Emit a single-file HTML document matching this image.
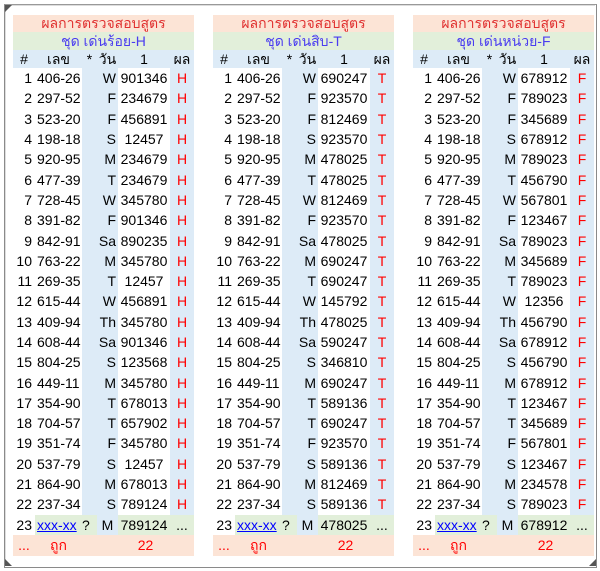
<!DOCTYPE html><html><head><meta charset="utf-8"><style>
body{margin:0;width:600px;height:571px;background:#fff;position:relative;overflow:hidden;font-family:"Liberation Sans","Noto Sans CJK SC",sans-serif;font-size:14px;color:#000}
.fr{position:absolute;left:4px;top:4px;width:591px;height:562px;border:1px solid #8a8a8a;border-top-color:#999}
.fr2{position:absolute;left:5px;top:5px;width:589px;height:560px;border:1px solid #ddd;border-right:none;border-bottom:none}
.tri{position:absolute;width:0;height:0}
table{position:absolute;top:15px;width:181px;border-collapse:collapse;table-layout:fixed}
td{padding:0;height:20.3px;line-height:20px;white-space:nowrap;overflow:hidden}
.h1 td{background:#fce4d6;color:#e03030;text-align:center;height:17px;line-height:17px}
.h2 td{background:#e2efda;color:#4a3cf0;text-align:center;height:18px;line-height:18px}
.h3 td{background:#ddebf7;height:18px;line-height:18px;text-align:center}
.n{text-align:right;padding-right:3px}
.l{padding-left:2px}
.b{background:#ddebf7}
.d{text-align:right;padding-right:2px}
.v{text-align:center}
.r{color:#f00;text-align:center}
.g{background:#e2efda}
.ft td{background:#fce4d6;color:#f00;height:21px}
a{color:#00f}
</style></head><body>
<div class="fr"></div><div class="fr2"></div>
<div class="tri" style="left:5px;top:5px;border-top:7px solid #555;border-right:7px solid transparent"></div>
<div class="tri" style="left:5px;top:559px;border-bottom:7px solid #555;border-right:7px solid transparent"></div>
<div class="tri" style="left:589px;top:559px;border-bottom:7px solid #555;border-left:7px solid transparent"></div>

<table style="left:13px">
<colgroup><col style="width:22px"><col style="width:47px"><col style="width:15px"><col style="width:21px"><col style="width:52px"><col style="width:24px"></colgroup>
<tr class="h1"><td colspan="6">ผลการตรวจสอบสูตร</td></tr>
<tr class="h2"><td colspan="6">ชุด เด่นร้อย-H</td></tr>
<tr class="h3"><td>#</td><td>เลข</td><td>*</td><td>วัน</td><td>1</td><td>ผล</td></tr>
<tr><td class="n">1</td><td class="l">406-26</td><td class="b"></td><td class="b d">W</td><td class="v">901346</td><td class="b r">H</td></tr>
<tr><td class="n">2</td><td class="l">297-52</td><td class="b"></td><td class="b d">F</td><td class="v">234679</td><td class="b r">H</td></tr>
<tr><td class="n">3</td><td class="l">523-20</td><td class="b"></td><td class="b d">F</td><td class="v">456891</td><td class="b r">H</td></tr>
<tr><td class="n">4</td><td class="l">198-18</td><td class="b"></td><td class="b d">S</td><td class="v">12457</td><td class="b r">H</td></tr>
<tr><td class="n">5</td><td class="l">920-95</td><td class="b"></td><td class="b d">M</td><td class="v">234679</td><td class="b r">H</td></tr>
<tr><td class="n">6</td><td class="l">477-39</td><td class="b"></td><td class="b d">T</td><td class="v">234679</td><td class="b r">H</td></tr>
<tr><td class="n">7</td><td class="l">728-45</td><td class="b"></td><td class="b d">W</td><td class="v">345780</td><td class="b r">H</td></tr>
<tr><td class="n">8</td><td class="l">391-82</td><td class="b"></td><td class="b d">F</td><td class="v">901346</td><td class="b r">H</td></tr>
<tr><td class="n">9</td><td class="l">842-91</td><td class="b"></td><td class="b d">Sa</td><td class="v">890235</td><td class="b r">H</td></tr>
<tr><td class="n">10</td><td class="l">763-22</td><td class="b"></td><td class="b d">M</td><td class="v">345780</td><td class="b r">H</td></tr>
<tr><td class="n">11</td><td class="l">269-35</td><td class="b"></td><td class="b d">T</td><td class="v">12457</td><td class="b r">H</td></tr>
<tr><td class="n">12</td><td class="l">615-44</td><td class="b"></td><td class="b d">W</td><td class="v">456891</td><td class="b r">H</td></tr>
<tr><td class="n">13</td><td class="l">409-94</td><td class="b"></td><td class="b d">Th</td><td class="v">345780</td><td class="b r">H</td></tr>
<tr><td class="n">14</td><td class="l">608-44</td><td class="b"></td><td class="b d">Sa</td><td class="v">901346</td><td class="b r">H</td></tr>
<tr><td class="n">15</td><td class="l">804-25</td><td class="b"></td><td class="b d">S</td><td class="v">123568</td><td class="b r">H</td></tr>
<tr><td class="n">16</td><td class="l">449-11</td><td class="b"></td><td class="b d">M</td><td class="v">345780</td><td class="b r">H</td></tr>
<tr><td class="n">17</td><td class="l">354-90</td><td class="b"></td><td class="b d">T</td><td class="v">678013</td><td class="b r">H</td></tr>
<tr><td class="n">18</td><td class="l">704-57</td><td class="b"></td><td class="b d">T</td><td class="v">657902</td><td class="b r">H</td></tr>
<tr><td class="n">19</td><td class="l">351-74</td><td class="b"></td><td class="b d">F</td><td class="v">345780</td><td class="b r">H</td></tr>
<tr><td class="n">20</td><td class="l">537-79</td><td class="b"></td><td class="b d">S</td><td class="v">12457</td><td class="b r">H</td></tr>
<tr><td class="n">21</td><td class="l">864-90</td><td class="b"></td><td class="b d">M</td><td class="v">678013</td><td class="b r">H</td></tr>
<tr><td class="n">22</td><td class="l">237-34</td><td class="b"></td><td class="b d">S</td><td class="v">789124</td><td class="b r">H</td></tr>
<tr><td class="n">23</td><td class="l g"><a href="#">xxx-xx</a></td><td class="g">?</td><td class="b v">M</td><td class="v g">789124</td><td class="g v">...</td></tr>
<tr class="ft"><td class="v">...</td><td class="v">ถูก</td><td></td><td colspan="3" class="v">22</td></tr>
</table>

<table style="left:213px">
<colgroup><col style="width:22px"><col style="width:47px"><col style="width:15px"><col style="width:21px"><col style="width:52px"><col style="width:24px"></colgroup>
<tr class="h1"><td colspan="6">ผลการตรวจสอบสูตร</td></tr>
<tr class="h2"><td colspan="6">ชุด เด่นสิบ-T</td></tr>
<tr class="h3"><td>#</td><td>เลข</td><td>*</td><td>วัน</td><td>1</td><td>ผล</td></tr>
<tr><td class="n">1</td><td class="l">406-26</td><td class="b"></td><td class="b d">W</td><td class="v">690247</td><td class="b r">T</td></tr>
<tr><td class="n">2</td><td class="l">297-52</td><td class="b"></td><td class="b d">F</td><td class="v">923570</td><td class="b r">T</td></tr>
<tr><td class="n">3</td><td class="l">523-20</td><td class="b"></td><td class="b d">F</td><td class="v">812469</td><td class="b r">T</td></tr>
<tr><td class="n">4</td><td class="l">198-18</td><td class="b"></td><td class="b d">S</td><td class="v">923570</td><td class="b r">T</td></tr>
<tr><td class="n">5</td><td class="l">920-95</td><td class="b"></td><td class="b d">M</td><td class="v">478025</td><td class="b r">T</td></tr>
<tr><td class="n">6</td><td class="l">477-39</td><td class="b"></td><td class="b d">T</td><td class="v">478025</td><td class="b r">T</td></tr>
<tr><td class="n">7</td><td class="l">728-45</td><td class="b"></td><td class="b d">W</td><td class="v">812469</td><td class="b r">T</td></tr>
<tr><td class="n">8</td><td class="l">391-82</td><td class="b"></td><td class="b d">F</td><td class="v">923570</td><td class="b r">T</td></tr>
<tr><td class="n">9</td><td class="l">842-91</td><td class="b"></td><td class="b d">Sa</td><td class="v">478025</td><td class="b r">T</td></tr>
<tr><td class="n">10</td><td class="l">763-22</td><td class="b"></td><td class="b d">M</td><td class="v">690247</td><td class="b r">T</td></tr>
<tr><td class="n">11</td><td class="l">269-35</td><td class="b"></td><td class="b d">T</td><td class="v">690247</td><td class="b r">T</td></tr>
<tr><td class="n">12</td><td class="l">615-44</td><td class="b"></td><td class="b d">W</td><td class="v">145792</td><td class="b r">T</td></tr>
<tr><td class="n">13</td><td class="l">409-94</td><td class="b"></td><td class="b d">Th</td><td class="v">478025</td><td class="b r">T</td></tr>
<tr><td class="n">14</td><td class="l">608-44</td><td class="b"></td><td class="b d">Sa</td><td class="v">590247</td><td class="b r">T</td></tr>
<tr><td class="n">15</td><td class="l">804-25</td><td class="b"></td><td class="b d">S</td><td class="v">346810</td><td class="b r">T</td></tr>
<tr><td class="n">16</td><td class="l">449-11</td><td class="b"></td><td class="b d">M</td><td class="v">690247</td><td class="b r">T</td></tr>
<tr><td class="n">17</td><td class="l">354-90</td><td class="b"></td><td class="b d">T</td><td class="v">589136</td><td class="b r">T</td></tr>
<tr><td class="n">18</td><td class="l">704-57</td><td class="b"></td><td class="b d">T</td><td class="v">690247</td><td class="b r">T</td></tr>
<tr><td class="n">19</td><td class="l">351-74</td><td class="b"></td><td class="b d">F</td><td class="v">923570</td><td class="b r">T</td></tr>
<tr><td class="n">20</td><td class="l">537-79</td><td class="b"></td><td class="b d">S</td><td class="v">589136</td><td class="b r">T</td></tr>
<tr><td class="n">21</td><td class="l">864-90</td><td class="b"></td><td class="b d">M</td><td class="v">812469</td><td class="b r">T</td></tr>
<tr><td class="n">22</td><td class="l">237-34</td><td class="b"></td><td class="b d">S</td><td class="v">589136</td><td class="b r">T</td></tr>
<tr><td class="n">23</td><td class="l g"><a href="#">xxx-xx</a></td><td class="g">?</td><td class="b v">M</td><td class="v g">478025</td><td class="g v">...</td></tr>
<tr class="ft"><td class="v">...</td><td class="v">ถูก</td><td></td><td colspan="3" class="v">22</td></tr>
</table>

<table style="left:413px">
<colgroup><col style="width:22px"><col style="width:47px"><col style="width:15px"><col style="width:21px"><col style="width:52px"><col style="width:24px"></colgroup>
<tr class="h1"><td colspan="6">ผลการตรวจสอบสูตร</td></tr>
<tr class="h2"><td colspan="6">ชุด เด่นหน่วย-F</td></tr>
<tr class="h3"><td>#</td><td>เลข</td><td>*</td><td>วัน</td><td>1</td><td>ผล</td></tr>
<tr><td class="n">1</td><td class="l">406-26</td><td class="b"></td><td class="b d">W</td><td class="v">678912</td><td class="b r">F</td></tr>
<tr><td class="n">2</td><td class="l">297-52</td><td class="b"></td><td class="b d">F</td><td class="v">789023</td><td class="b r">F</td></tr>
<tr><td class="n">3</td><td class="l">523-20</td><td class="b"></td><td class="b d">F</td><td class="v">345689</td><td class="b r">F</td></tr>
<tr><td class="n">4</td><td class="l">198-18</td><td class="b"></td><td class="b d">S</td><td class="v">678912</td><td class="b r">F</td></tr>
<tr><td class="n">5</td><td class="l">920-95</td><td class="b"></td><td class="b d">M</td><td class="v">789023</td><td class="b r">F</td></tr>
<tr><td class="n">6</td><td class="l">477-39</td><td class="b"></td><td class="b d">T</td><td class="v">456790</td><td class="b r">F</td></tr>
<tr><td class="n">7</td><td class="l">728-45</td><td class="b"></td><td class="b d">W</td><td class="v">567801</td><td class="b r">F</td></tr>
<tr><td class="n">8</td><td class="l">391-82</td><td class="b"></td><td class="b d">F</td><td class="v">123467</td><td class="b r">F</td></tr>
<tr><td class="n">9</td><td class="l">842-91</td><td class="b"></td><td class="b d">Sa</td><td class="v">789023</td><td class="b r">F</td></tr>
<tr><td class="n">10</td><td class="l">763-22</td><td class="b"></td><td class="b d">M</td><td class="v">345689</td><td class="b r">F</td></tr>
<tr><td class="n">11</td><td class="l">269-35</td><td class="b"></td><td class="b d">T</td><td class="v">789023</td><td class="b r">F</td></tr>
<tr><td class="n">12</td><td class="l">615-44</td><td class="b"></td><td class="b d">W</td><td class="v">12356</td><td class="b r">F</td></tr>
<tr><td class="n">13</td><td class="l">409-94</td><td class="b"></td><td class="b d">Th</td><td class="v">456790</td><td class="b r">F</td></tr>
<tr><td class="n">14</td><td class="l">608-44</td><td class="b"></td><td class="b d">Sa</td><td class="v">678912</td><td class="b r">F</td></tr>
<tr><td class="n">15</td><td class="l">804-25</td><td class="b"></td><td class="b d">S</td><td class="v">456790</td><td class="b r">F</td></tr>
<tr><td class="n">16</td><td class="l">449-11</td><td class="b"></td><td class="b d">M</td><td class="v">678912</td><td class="b r">F</td></tr>
<tr><td class="n">17</td><td class="l">354-90</td><td class="b"></td><td class="b d">T</td><td class="v">123467</td><td class="b r">F</td></tr>
<tr><td class="n">18</td><td class="l">704-57</td><td class="b"></td><td class="b d">T</td><td class="v">345689</td><td class="b r">F</td></tr>
<tr><td class="n">19</td><td class="l">351-74</td><td class="b"></td><td class="b d">F</td><td class="v">567801</td><td class="b r">F</td></tr>
<tr><td class="n">20</td><td class="l">537-79</td><td class="b"></td><td class="b d">S</td><td class="v">123467</td><td class="b r">F</td></tr>
<tr><td class="n">21</td><td class="l">864-90</td><td class="b"></td><td class="b d">M</td><td class="v">234578</td><td class="b r">F</td></tr>
<tr><td class="n">22</td><td class="l">237-34</td><td class="b"></td><td class="b d">S</td><td class="v">789023</td><td class="b r">F</td></tr>
<tr><td class="n">23</td><td class="l g"><a href="#">xxx-xx</a></td><td class="g">?</td><td class="b v">M</td><td class="v g">678912</td><td class="g v">...</td></tr>
<tr class="ft"><td class="v">...</td><td class="v">ถูก</td><td></td><td colspan="3" class="v">22</td></tr>
</table>
</body></html>
